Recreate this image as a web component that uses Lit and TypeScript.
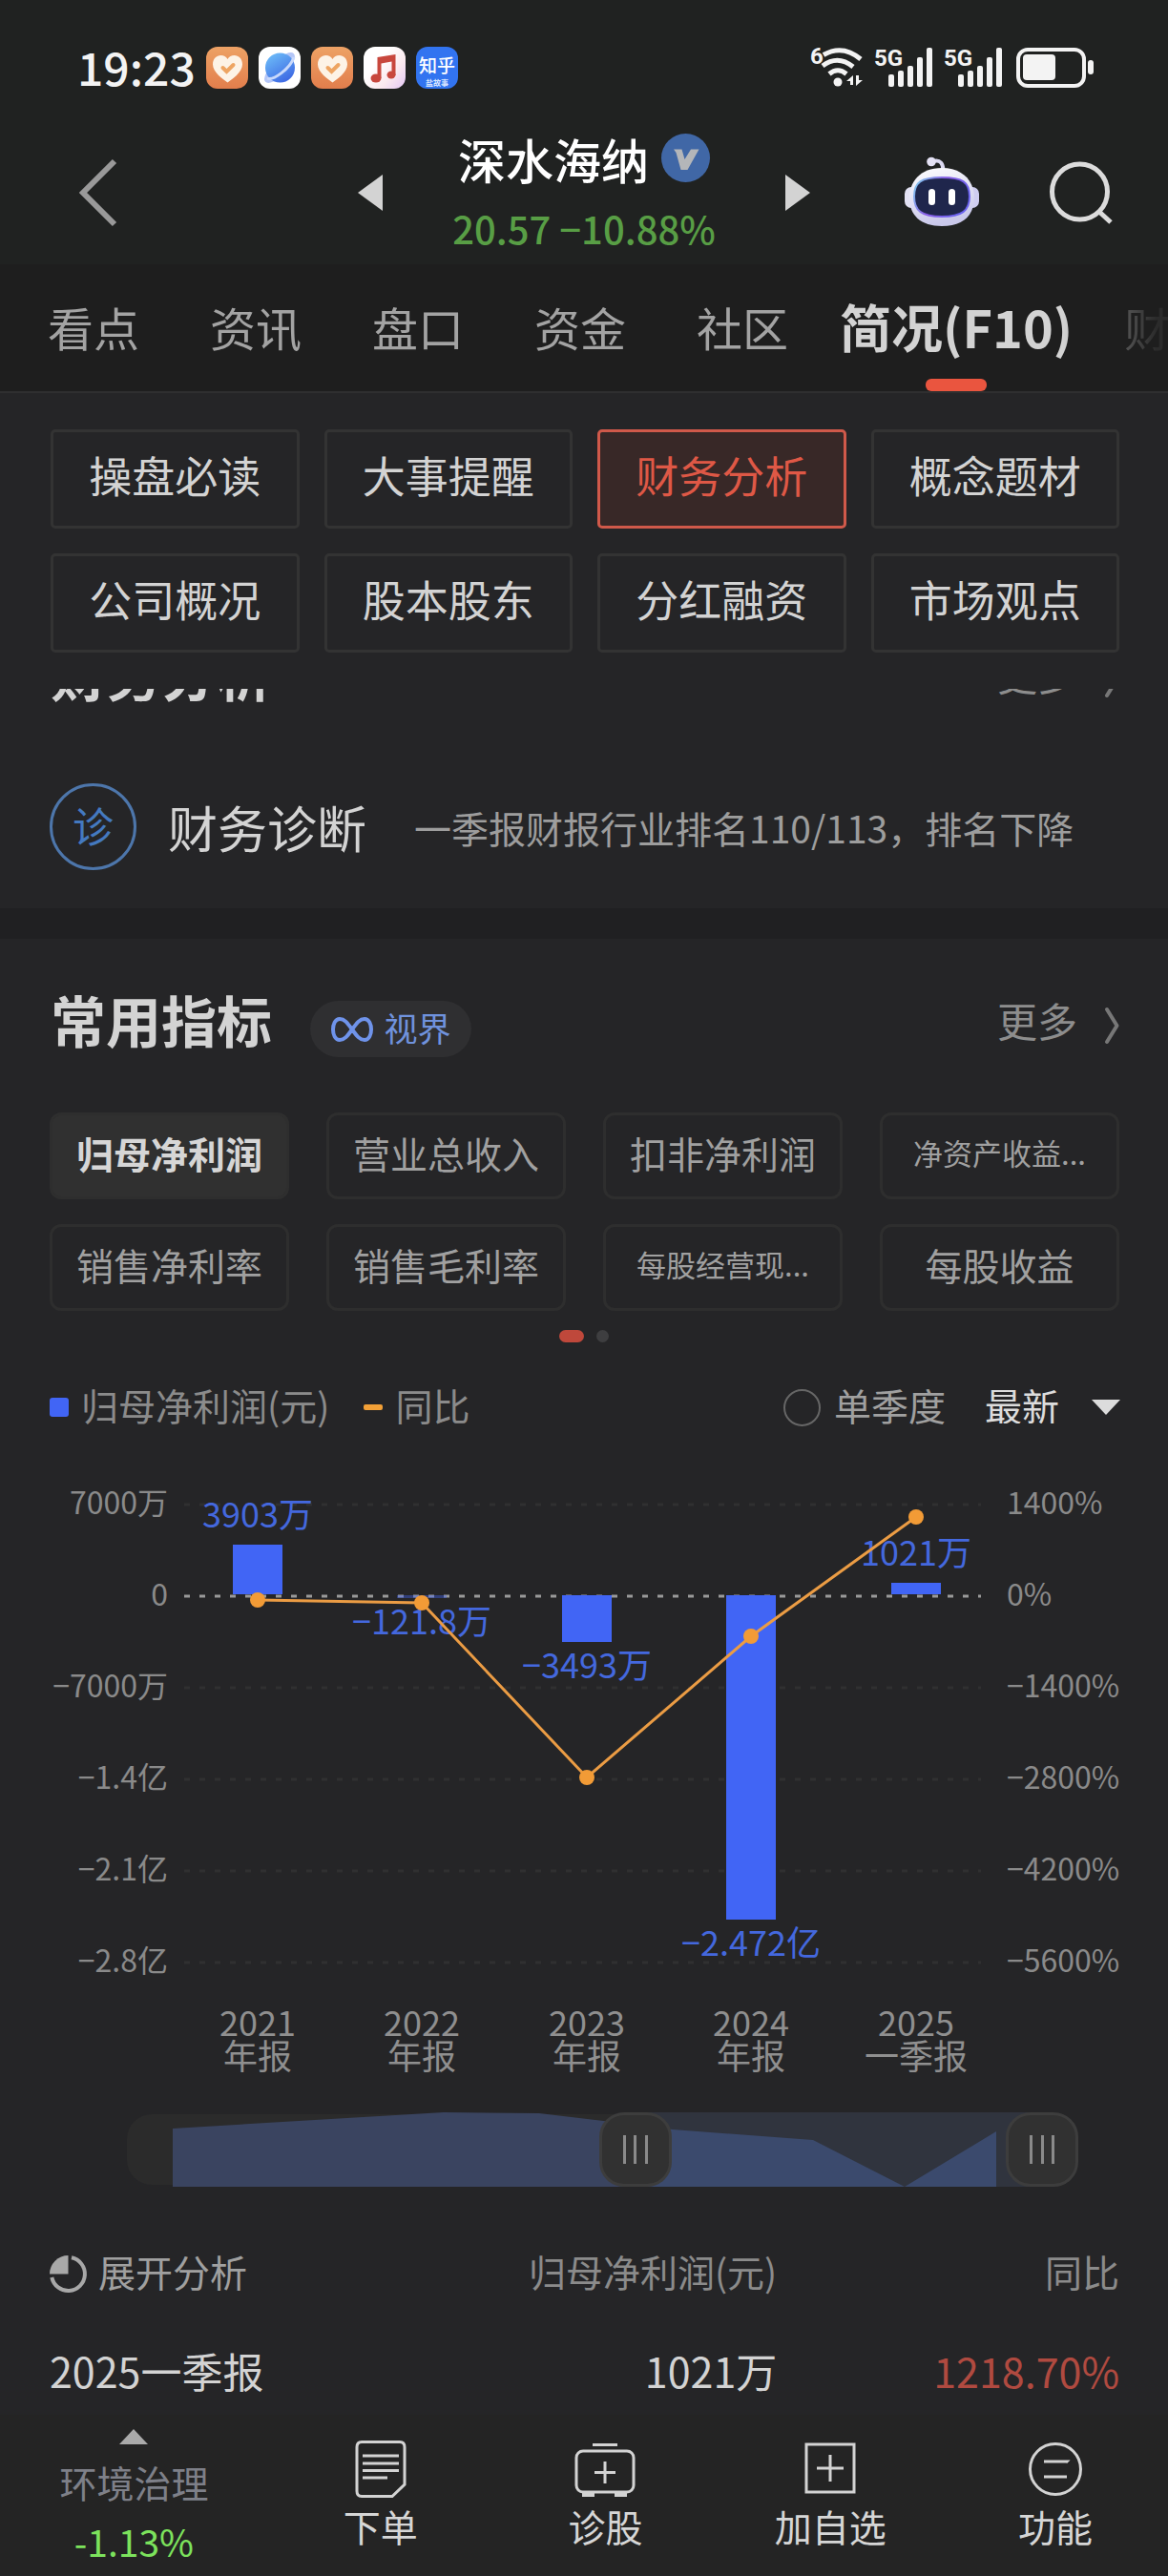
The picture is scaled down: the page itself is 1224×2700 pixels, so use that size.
import { LitElement, html, svg, css } from "lit";
import { customElement, property } from "lit/decorators.js";
import { classMap } from "lit/directives/class-map.js";

const FONT = css`"Noto Sans CJK SC", "Liberation Sans", sans-serif`;

const controls = css`
  * {
    box-sizing: border-box;
  }
  svg {
    display: block;
    flex: none;
    overflow: visible;
  }
  button,
  select {
    appearance: none;
    background: none;
    border: 0;
    padding: 0;
    margin: 0;
    color: inherit;
    font: inherit;
    cursor: pointer;
  }
  a {
    color: inherit;
    text-decoration: none;
  }
`;

@customElement("status-bar")
class StatusBar extends LitElement {
  static styles = [
    controls,
    css`
      :host {
        display: flex;
        align-items: center;
        justify-content: space-between;
        padding: 49px 77px 0 81px;
        color: #f3f3f3;
      }
      .group {
        display: flex;
        align-items: center;
        gap: 11px;
        height: 44px;
      }
      .time {
        padding-bottom: 4px;
        font-size: 48px;
        line-height: 44px;
        font-weight: 500;
      }
      .small {
        font-family: Roboto, sans-serif;
        font-size: 24px;
        font-weight: 700;
      }
    `,
  ];

  private heart(id: string) {
    return html`<svg width="44" height="44" viewBox="0 0 44 44" aria-hidden="true">
      <defs>
        <linearGradient id=${id} x2="0" y2="1">
          <stop offset="0" stop-color="#eda265" />
          <stop offset="1" stop-color="#e27e4c" />
        </linearGradient>
      </defs>
      <rect width="44" height="44" rx="12" fill="url(#${id})" />
      <path
        d="M22.500 37.500C18 34 7 27 7 18.500C7 12.500 11 9 15.500 9C18.500 9 21 10.500 22.500 13C24 10.500 26.500 9 29.500 9C34 9 38 12.500 38 18.500C38 27 27 34 22.500 37.500Z"
        fill="#fdf3e6"
      />
      <path d="M17.500 22L21.500 26L28.500 19" fill="none" stroke="#eea562" stroke-width="4" stroke-linecap="round" />
    </svg>`;
  }

  private cell() {
    return html`<svg width="62" height="44" viewBox="0 0 62 44" aria-hidden="true">
      <text class="small" x="-1" y="20" fill="#f3f3f3">5G</text>
      ${[13, 17, 22, 31, 41].map(
        (h, i) => svg`<rect x=${14 + i * 10} y=${42 - h} width="6" height=${h} rx="2" fill="#f3f3f3" />`,
      )}
    </svg>`;
  }

  render() {
    return html`
      <div class="group">
        <span class="time">19:23</span>
        ${this.heart("h1")}
        <svg width="44" height="44" viewBox="0 0 44 44" aria-hidden="true">
          <defs>
            <linearGradient id="globe" x1="0.2" x2="0.8" y2="1">
              <stop offset="0" stop-color="#6dbcf8" />
              <stop offset="1" stop-color="#3a63e2" />
            </linearGradient>
          </defs>
          <rect width="44" height="44" rx="12" fill="#fff" />
          <ellipse cx="22" cy="22" rx="21" ry="8" transform="rotate(-45 22 22)" fill="#b4c6f7" />
          <circle cx="22.500" cy="22" r="15.500" fill="url(#globe)" />
          <path d="M9 33C15 36 33 23 37 11" fill="none" stroke="#c9d9fb" stroke-width="3" />
        </svg>
        ${this.heart("h2")}
        <svg width="44" height="44" viewBox="0 0 44 44" aria-hidden="true">
          <defs>
            <linearGradient id="music" x1="0.3" y1="0.4" x2="1" y2="1">
              <stop offset="0" stop-color="#fff" />
              <stop offset="0.5" stop-color="#fbe9ee" />
              <stop offset="1" stop-color="#e3c6f6" />
            </linearGradient>
          </defs>
          <rect width="44" height="44" rx="12" fill="url(#music)" />
          <path d="M14.500 11L33.500 8V30H29.500V15.500L18.500 17.500V33H14.500Z" fill="#c8473d" />
          <ellipse cx="13" cy="33" rx="5.500" ry="4.500" fill="#c8473d" />
          <ellipse cx="29" cy="29.500" rx="4.500" ry="4" fill="#c8473d" />
        </svg>
        <svg width="44" height="44" viewBox="0 0 44 44" aria-hidden="true">
          <rect width="44" height="44" rx="12" fill="#3274f0" />
          <text x="22" y="27" text-anchor="middle" font-size="19" font-weight="500" fill="#fff">知乎</text>
          <text x="22" y="41" text-anchor="middle" font-size="8" font-weight="700" fill="#dce8ff">盐故事</text>
        </svg>
      </div>
      <div class="group">
        <svg width="57" height="44" viewBox="0 0 57 44" aria-hidden="true">
          <text class="small" x="0" y="18" fill="#f3f3f3">6</text>
          <g fill="none" stroke="#f3f3f3" stroke-width="5">
            <path d="M14 8.500Q34 -3 53 13" />
            <path d="M13 20Q29 8 45 21" />
            <path d="M20 28.500Q29 21 38 28.500" />
          </g>
          <circle cx="29" cy="37" r="4.500" fill="#f3f3f3" />
          <path d="M45 30V40H42V36H38ZM48 41V30H51V35H55Z" fill="#f3f3f3" />
        </svg>
        ${this.cell()} ${this.cell()}
        <svg width="84" height="44" viewBox="0 0 84 44" aria-hidden="true">
          <rect x="4" y="3" width="69" height="38" rx="10" fill="none" stroke="#f3f3f3" stroke-width="4" />
          <rect x="9" y="8" width="34" height="27" rx="4" fill="#f3f3f3" />
          <rect x="77" y="14" width="6" height="15" rx="3" fill="#f3f3f3" />
        </svg>
      </div>
    `;
  }
}

@customElement("stock-header")
class StockHeader extends LitElement {
  static styles = [
    controls,
    css`
      :host {
        display: grid;
        grid-template-columns: 1fr minmax(0, 474px) 1fr;
        align-items: center;
        padding: 34px 0 0;
        height: 184px;
      }
      .back {
        justify-self: start;
        padding-left: 82px;
      }
      .switcher {
        display: flex;
        align-items: center;
        justify-content: space-between;
      }
      .quote {
        display: flex;
        flex-direction: column;
        align-items: center;
        gap: 13px;
      }
      .name {
        display: flex;
        align-items: center;
        gap: 13px;
        margin: 0;
        font-size: 50px;
        line-height: 60px;
        font-weight: 500;
        color: #fff;
      }
      .price {
        font-size: 40px;
        line-height: 60px;
        font-weight: 500;
        color: #589e45;
      }
      .actions {
        display: flex;
        align-items: center;
        justify-content: flex-end;
        gap: 74px;
        padding-right: 57px;
      }
    `,
  ];

  render() {
    return html`
      <button class="back" aria-label="返回">
        <svg width="42" height="74" viewBox="0 0 42 74">
          <path d="M38 4L5 37L38 70" fill="none" stroke="#999" stroke-width="6" />
        </svg>
      </button>
      <div class="switcher">
        <button aria-label="上一只">
          <svg width="26" height="38" viewBox="0 0 26 38"><path d="M26 0V38L0 19Z" fill="#d3d3d3" /></svg>
        </button>
        <div class="quote">
          <h1 class="name">
            <span>深水海纳</span>
            <svg width="51" height="51" viewBox="0 0 51 51" aria-hidden="true">
              <circle cx="25.500" cy="25.500" r="25.500" fill="#4067a6" />
              <path d="M13 16.500H21.500L24.500 27L31 16.500H39.500L27.500 38H20.500L15.500 20Z" fill="#b4b6b9" />
            </svg>
          </h1>
          <span class="price">20.57 −10.88%</span>
        </div>
        <button aria-label="下一只">
          <svg width="26" height="38" viewBox="0 0 26 38"><path d="M0 0V38L26 19Z" fill="#d3d3d3" /></svg>
        </button>
      </div>
      <div class="actions">
        <button aria-label="智能助手">
          <svg width="78" height="74" viewBox="0 0 78 74">
            <defs>
              <linearGradient id="shell" x2="0.3" y2="1">
                <stop offset="0" stop-color="#fff" />
                <stop offset="1" stop-color="#c9c8ea" />
              </linearGradient>
              <linearGradient id="rim" x2="1" y2="0.4">
                <stop offset="0" stop-color="#7fd3ee" />
                <stop offset="0.5" stop-color="#8a5ee6" />
                <stop offset="1" stop-color="#6a62ef" />
              </linearGradient>
            </defs>
            <path d="M30 4C38 2 40 7 40.500 13" fill="none" stroke="#dcdaf2" stroke-width="4" />
            <circle cx="28" cy="4.500" r="4.800" fill="#e4e2f5" />
            <rect x="0" y="31" width="14" height="22" rx="7" fill="#e2e1f3" />
            <rect x="64" y="31" width="14" height="22" rx="7" fill="#cfcdf0" />
            <path d="M39 11C62 11 73 26 73 42C73 61 61 72 39 72C17 72 5 61 5 42C5 26 16 11 39 11Z" fill="url(#shell)" />
            <path
              d="M39 21C61 21 68 26 68 41C68 56 60 62 39 62C18 62 10 56 10 41C10 26 17 21 39 21Z"
              fill="#1f264c"
              stroke="url(#rim)"
              stroke-width="2"
            />
            <rect x="25" y="33" width="7" height="17" rx="3.500" fill="#fff" />
            <rect x="46" y="33" width="7" height="17" rx="3.500" fill="#fff" />
          </svg>
        </button>
        <button aria-label="搜索">
          <svg width="67" height="66" viewBox="0 0 67 66">
            <circle cx="31.500" cy="32" r="29" fill="none" stroke="#dcdcdc" stroke-width="5" />
            <path d="M52 53L64 64" stroke="#dcdcdc" stroke-width="5" />
          </svg>
        </button>
      </div>
    `;
  }
}

@customElement("page-tabs")
class PageTabs extends LitElement {
  static styles = [
    controls,
    css`
      :host {
        display: block;
        background: #1e1e1e;
        border-bottom: 2px solid #2f2f30;
      }
      .tabs {
        display: flex;
        gap: 74px;
        height: 133px;
        padding-left: 50px;
        overflow: hidden;
        mask-image: linear-gradient(to right, #000 91%, rgba(0, 0, 0, 0.1) 99%);
      }
      .tab {
        position: relative;
        flex: none;
        padding-bottom: 4px;
        font-size: 48px;
        color: #a3a3a3;
      }
      .active {
        margin: 0 -20px;
        font-size: 54px;
        font-weight: 700;
        color: #d3d3d3;
      }
      .active::after {
        content: "";
        position: absolute;
        left: 50%;
        bottom: 0;
        width: 64px;
        height: 13px;
        margin-left: -32px;
        border-radius: 6px;
        background: #ea553f;
      }
    `,
  ];

  render() {
    const tabs = ["看点", "资讯", "盘口", "资金", "社区", "简况(F10)", "财务"];
    return html`<nav class="tabs">
      ${tabs.map((t, i) => html`<button class=${classMap({ tab: true, active: i === 5 })}>${t}</button>`)}
    </nav>`;
  }
}

@customElement("section-head")
class SectionHead extends LitElement {
  @property() heading = "";

  static styles = [
    controls,
    css`
      :host {
        display: flex;
        flex: none;
        align-items: flex-start;
        gap: 40px;
        height: 124px;
        padding: 65px 51px 0 53px;
      }
      .title {
        margin: 0;
        font-size: 58px;
        line-height: 38px;
        font-weight: 700;
        color: #d3d3d3;
      }
      .more {
        display: flex;
        align-items: flex-start;
        gap: 28px;
        margin-left: auto;
        font-size: 42px;
        line-height: 40px;
        color: #8d8d8d;
      }
      .arrow {
        margin-top: 7px;
      }
    `,
  ];

  render() {
    return html`
      <h2 class="title">${this.heading}</h2>
      <slot></slot>
      <a class="more" href="#more"
        >更多
        <svg class="arrow" width="16" height="38" viewBox="0 0 16 38" aria-hidden="true">
          <path d="M3 2L13.500 19L3 36" fill="none" stroke="#777" stroke-width="4" stroke-linecap="round" stroke-linejoin="round" />
        </svg>
      </a>
    `;
  }
}

interface Report {
  year: string;
  kind: string;
  label: string;
  profit: number;
  growth: number;
}

const REPORTS: Report[] = [
  { year: "2021", kind: "年报", label: "3903万", profit: 3903, growth: -40 },
  { year: "2022", kind: "年报", label: "−121.8万", profit: -121.8, growth: -90 },
  { year: "2023", kind: "年报", label: "−3493万", profit: -3493, growth: -2760 },
  { year: "2024", kind: "年报", label: "−2.472亿", profit: -24720, growth: -600 },
  { year: "2025", kind: "一季报", label: "1021万", profit: 1021, growth: 1218.7 },
];

@customElement("profit-chart")
class ProfitChart extends LitElement {
  static styles = css`
    :host {
      display: block;
    }
    .chart {
      display: block;
      width: 100%;
      height: auto;
    }
    .axis {
      font-size: 32px;
      fill: #8a8a8a;
    }
    .period {
      font-size: 36px;
      fill: #8f8f8f;
      text-anchor: middle;
    }
    .value {
      font-size: 36px;
      fill: #4468de;
      text-anchor: middle;
    }
    .end {
      text-anchor: end;
    }
  `;

  render() {
    const zero = 154;
    const step = 96;
    const left = ["7000万", "0", "−7000万", "−1.4亿", "−2.1亿", "−2.8亿"];
    const right = ["1400%", "0%", "−1400%", "−2800%", "−4200%", "−5600%"];
    const x = (i: number) => 270 + Math.round(i * 172.4);
    const yBar = (v: number) => Math.round(zero - (v / 7000) * step);
    const yLine = (v: number) => Math.round(zero + 1 - (v / 1400) * step);
    return html`<svg class="chart" viewBox="0 0 1224 670" role="img" aria-label="归母净利润与同比">
      ${left.map((label, i) => {
        const y = zero + (i - 1) * step;
        return svg`
          <path d="M193 ${y}H1028" stroke=${i === 1 ? "#999" : "#303031"} stroke-width="3" stroke-dasharray="6 10" />
          <text class="axis end" x="176" y=${y + 10}>${label}</text>
          <text class="axis" x="1055" y=${y + 10}>${right[i]}</text>`;
      })}
      ${REPORTS.map((r, i) => {
        const y = yBar(r.profit);
        const top = Math.min(y, zero - 1);
        const height = Math.max(y, zero - 2) - top;
        return svg`<rect x=${x(i) - 26} y=${top} width="52" height=${height} fill="#4165f5" fill-opacity=${height < 4 ? 0.4 : 1} />`;
      })}
      ${REPORTS.map((r, i) => {
        const y = yBar(r.profit);
        return svg`<text class="value" x=${x(i)} y=${r.profit > 0 ? y - 18 : y + 38}>${r.label}</text>`;
      })}
      <polyline
        points=${REPORTS.map((r, i) => `${x(i)},${yLine(r.growth)}`).join(" ")}
        fill="none"
        stroke="#eb9c44"
        stroke-width="3"
      />
      ${REPORTS.map((r, i) => svg`<circle cx=${x(i)} cy=${yLine(r.growth)} r="8" fill="#f29b36" />`)}
      ${REPORTS.map(
        (r, i) => svg`
          <text class="period"><tspan x=${x(i)} y="615">${r.year}</tspan><tspan x=${x(i)} y="650">${r.kind}</tspan></text>`,
      )}
    </svg>`;
  }
}

@customElement("range-window")
class RangeWindow extends LitElement {
  static styles = css`
    :host {
      display: block;
      position: relative;
      height: 78px;
      margin: 25px 94px 0 133px;
    }
    .track {
      display: block;
      width: 100%;
      height: 78px;
    }
    .handle {
      appearance: none;
      position: absolute;
      inset: 0;
      width: 100%;
      height: 78px;
      margin: 0;
      background: none;
      pointer-events: none;
    }
    .handle::-webkit-slider-thumb {
      appearance: none;
      box-sizing: border-box;
      width: 76px;
      height: 78px;
      border: 3px solid #3d3d3d;
      border-radius: 26px;
      background:
        linear-gradient(#8a8a8a, #8a8a8a) 22px 50% / 3px 30px no-repeat,
        linear-gradient(#8a8a8a, #8a8a8a) 50% 50% / 3px 30px no-repeat,
        linear-gradient(#8a8a8a, #8a8a8a) 45px 50% / 3px 30px no-repeat,
        #313131;
      pointer-events: auto;
    }
  `;

  render() {
    return html`
      <svg class="track" viewBox="0 0 997 78" preserveAspectRatio="none" aria-hidden="true">
        <rect y="2" width="997" height="74" rx="26" fill="#2b2b2b" />
        <rect x="533" width="426" height="78" fill="#30343e" />
        <path d="M48 78V17L146 11L332 0L432 1L533 13V78Z" fill="#3a4460" />
        <path d="M533 13L572 18L719 29L815 78H533ZM815 78L911 20V78Z" fill="#3b4a6d" />
      </svg>
      <input class="handle" type="range" min="0" max="1000" value="537" aria-label="起始报告期" />
      <input class="handle" type="range" min="0" max="1000" value="1000" aria-label="结束报告期" />
    `;
  }
}

@customElement("bottom-bar")
class BottomBar extends LitElement {
  static styles = [
    controls,
    css`
      :host {
        display: grid;
        grid-template-columns: 281fr repeat(4, 236fr);
        height: 168px;
        background: #242424;
        font-size: 39px;
        line-height: 46px;
        color: #d6d6d6;
      }
      .item {
        display: flex;
        flex-direction: column;
        align-items: center;
        gap: 6px;
        padding-top: 27px;
      }
      .sector {
        gap: 16px;
        padding-top: 15px;
        color: #7e8089;
      }
      .fall {
        color: #7ce25c;
      }
    `,
  ];

  render() {
    const stroke = "#d3d3d3";
    return html`
      <button class="item sector">
        <svg width="30" height="16" viewBox="0 0 30 16"><path d="M15 0L30 16H0Z" fill="#aaa" /></svg>
        <span>环境治理</span>
        <span class="fall">-1.13%</span>
      </button>
      <button class="item">
        <svg width="60" height="60" viewBox="0 0 60 60" fill="none" stroke=${stroke} stroke-width="3">
          <path d="M10 1.500H50Q55 1.500 55 7V46L42 58.500H10Q5 58.500 5 53V7Q5 1.500 10 1.500Z" />
          <path d="M11 16H49M11 24H49M11 31.500H49M11 39H37" />
        </svg>
        <span>下单</span>
      </button>
      <button class="item">
        <svg width="64" height="60" viewBox="0 0 64 60" fill="none" stroke=${stroke} stroke-width="3">
          <rect x="2" y="11" width="60" height="43" rx="7" />
          <path d="M19 4.500H45M32 22V45M21 33.500H43" />
          <path d="M8 57H21M42 57H55" stroke-width="4" />
        </svg>
        <span>诊股</span>
      </button>
      <button class="item">
        <svg width="60" height="60" viewBox="0 0 60 60" fill="none" stroke=${stroke} stroke-width="3">
          <rect x="5" y="4" width="50" height="50" />
          <path d="M30 15V43M16 29H44" />
        </svg>
        <span>加自选</span>
      </button>
      <button class="item">
        <svg width="60" height="60" viewBox="0 0 60 60" fill="none" stroke=${stroke} stroke-width="3">
          <circle cx="30" cy="30" r="26.500" />
          <path d="M18 22H42L41 23M18 38H42" />
        </svg>
        <span>功能</span>
      </button>
    `;
  }
}

@customElement("app-root")
class AppRoot extends LitElement {
  static styles = [
    controls,
    css`
      :host {
        display: block;
        min-height: 100vh;
        background: #252527;
        font-family: ${FONT};
        color: #d3d3d3;
      }
      .top {
        background: #202221;
      }
      .shortcuts {
        display: grid;
        grid-template-columns: repeat(4, 1fr);
        gap: 26px;
        padding: 38px 51px 38px 53px;
      }
      .shortcut {
        height: 104px;
        padding-bottom: 10px;
        border: 3px solid #333;
        border-radius: 5px;
        font-size: 45px;
      }
      .shortcut.active {
        border-color: #d0594a;
        background: #382827;
        color: #df5846;
      }
      .scroller {
        height: 230px;
        overflow: hidden;
        display: flex;
        flex-direction: column;
        justify-content: flex-end;
      }
      .diagnosis {
        display: flex;
        flex: none;
        align-items: center;
        padding: 76px 51px 40px 52px;
        white-space: nowrap;
      }
      .stamp {
        display: grid;
        place-items: center;
        width: 91px;
        height: 91px;
        padding-bottom: 4px;
        border: 3px solid #4d76ab;
        border-radius: 50%;
        font-size: 43px;
        line-height: 43px;
        color: #4479c0;
      }
      .diagnosis-name {
        margin-left: 33px;
        font-size: 52px;
      }
      .diagnosis-text {
        margin-left: 50px;
        font-size: 39px;
        color: #9d9d9d;
      }
      .band {
        height: 32px;
        background: #202022;
      }
      .lens {
        display: flex;
        align-items: center;
        justify-content: center;
        gap: 12px;
        width: 169px;
        height: 59px;
        border-radius: 30px;
        background: #2f2f31;
        font-size: 35px;
        line-height: 50px;
        color: #6f92dd;
      }
      .lens-name {
        padding-bottom: 4px;
      }
      .metrics {
        display: grid;
        grid-template-columns: repeat(4, 1fr);
        gap: 26px 39px;
        padding: 58px 51px 20px 52px;
      }
      .metric {
        height: 91px;
        padding-bottom: 8px;
        border: 3px solid #2e2e2e;
        border-radius: 12px;
        font-size: 39px;
        white-space: nowrap;
        color: #a0a0a0;
      }
      .metric.long {
        font-size: 31px;
      }
      .metric.active {
        background: #303030;
        font-weight: 700;
        color: #d6d6d6;
      }
      .pager {
        display: flex;
        justify-content: center;
        gap: 13px;
      }
      .dot {
        width: 13px;
        height: 13px;
        border-radius: 7px;
        background: #3e3e40;
      }
      .dot.active {
        width: 26px;
        background: #bf483b;
      }
      .legend {
        display: flex;
        align-items: center;
        height: 40px;
        margin: 48px 50px 24px 52px;
        font-size: 39px;
        line-height: 40px;
        white-space: nowrap;
        color: #8b8b8b;
      }
      .key {
        display: flex;
        align-items: center;
        gap: 13px;
        margin-right: 36px;
      }
      .caption {
        display: inline-block;
        padding-bottom: 7px;
      }
      .swatch {
        width: 20px;
        height: 20px;
        border-radius: 3px;
        background: #4165f5;
      }
      .dash {
        width: 20px;
        height: 6px;
        border-radius: 2px;
        background: #f2a037;
      }
      .quarter {
        display: flex;
        align-items: center;
        gap: 14px;
        margin-left: auto;
        color: #a0a0a0;
      }
      .check {
        appearance: none;
        width: 39px;
        height: 39px;
        margin: 0;
        border: 2px solid #666;
        border-radius: 50%;
      }
      .check:checked {
        border-width: 12px;
      }
      .order {
        display: flex;
        align-items: center;
        gap: 33px;
        margin-left: 41px;
        color: #dcdcdc;
      }
      .order select {
        padding-bottom: 7px;
      }
      .order select option {
        color: #222;
      }
      .figures {
        width: 100%;
        border-collapse: collapse;
        table-layout: fixed;
      }
      .figures-wrap {
        padding: 58px 51px 17px 52px;
      }
      .figures th,
      .figures td {
        padding: 0;
        font-weight: 400;
        text-align: right;
      }
      .figures th:first-child {
        width: 36%;
        text-align: left;
      }
      .figures thead th {
        height: 60px;
        padding-top: 7px;
        font-size: 39px;
        line-height: 46px;
        vertical-align: top;
        color: #8b8b8b;
      }
      .figures tbody th,
      .figures tbody td {
        padding-top: 44px;
        font-size: 43px;
        line-height: 60px;
      }
      .figures .rise {
        color: #b04a40;
      }
      .expand {
        display: flex;
        align-items: center;
        gap: 12px;
        color: #a0a0a0;
      }
    `,
  ];

  render() {
    const shortcuts = ["操盘必读", "大事提醒", "财务分析", "概念题材", "公司概况", "股本股东", "分红融资", "市场观点"];
    const metrics = ["归母净利润", "营业总收入", "扣非净利润", "净资产收益...", "销售净利率", "销售毛利率", "每股经营现...", "每股收益"];
    return html`
      <header class="top">
        <status-bar></status-bar>
        <stock-header></stock-header>
      </header>
      <page-tabs></page-tabs>
      <main>
        <nav class="shortcuts">
          ${shortcuts.map((s, i) => html`<button class=${classMap({ shortcut: true, active: i === 2 })}>${s}</button>`)}
        </nav>
        <section class="scroller">
          <section-head heading="财务分析"></section-head>
          <a class="diagnosis" href="#diagnosis">
            <span class="stamp">诊</span>
            <span class="diagnosis-name">财务诊断</span>
            <span class="diagnosis-text">一季报财报行业排名110/113，排名下降</span>
          </a>
        </section>
        <div class="band"></div>
        <section>
          <section-head heading="常用指标">
            <button class="lens">
              <svg width="44" height="26" viewBox="0 0 44 26" aria-hidden="true">
                <path
                  d="M22 13C17 6 14 2 9 2C4 2 2 8 2 13C2 18 4 24 9 24C14 24 17 20 22 13C27 6 30 2 35 2C40 2 42 8 42 13C42 18 40 24 35 24C30 24 27 20 22 13Z"
                  fill="none"
                  stroke="#6f93ea"
                  stroke-width="4"
                />
              </svg>
              <span class="lens-name">视界</span>
            </button>
          </section-head>
          <div class="metrics">
            ${metrics.map(
              (m, i) =>
                html`<button class=${classMap({ metric: true, active: i === 0, long: m.endsWith("...") })}>${m}</button>`,
            )}
          </div>
          <div class="pager"><span class="dot active"></span><span class="dot"></span></div>
          <div class="legend">
            <span class="key"><span class="swatch"></span><span class="caption">归母净利润(元)</span></span>
            <span class="key"><span class="dash"></span><span class="caption">同比</span></span>
            <label class="quarter"><input class="check" type="checkbox" /><span class="caption">单季度</span></label>
            <label class="order">
              <select aria-label="排序">
                <option>最新</option>
              </select>
              <svg width="30" height="16" viewBox="0 0 30 16" aria-hidden="true"><path d="M0 0H30L15 16Z" fill="#dcdcdc" /></svg>
            </label>
          </div>
          <profit-chart></profit-chart>
          <range-window></range-window>
          <div class="figures-wrap">
            <table class="figures">
              <thead>
                <tr>
                  <th>
                    <button class="expand">
                      <svg width="39" height="39" viewBox="0 0 39 39" aria-hidden="true">
                        <path d="M19.500 0V19.500H0A19.500 19.500 0 0 1 19.500 0Z" fill="#a8a8a8" />
                        <path d="M23 2.300A17.500 17.500 0 1 1 2.300 23" fill="none" stroke="#a8a8a8" stroke-width="4" />
                      </svg>
                      <span class="caption">展开分析</span>
                    </button>
                  </th>
                  <th><span class="caption">归母净利润(元)</span></th>
                  <th><span class="caption">同比</span></th>
                </tr>
              </thead>
              <tbody>
                <tr>
                  <th>2025一季报</th>
                  <td>1021万</td>
                  <td class="rise">1218.70%</td>
                </tr>
              </tbody>
            </table>
          </div>
        </section>
      </main>
      <bottom-bar></bottom-bar>
    `;
  }
}
